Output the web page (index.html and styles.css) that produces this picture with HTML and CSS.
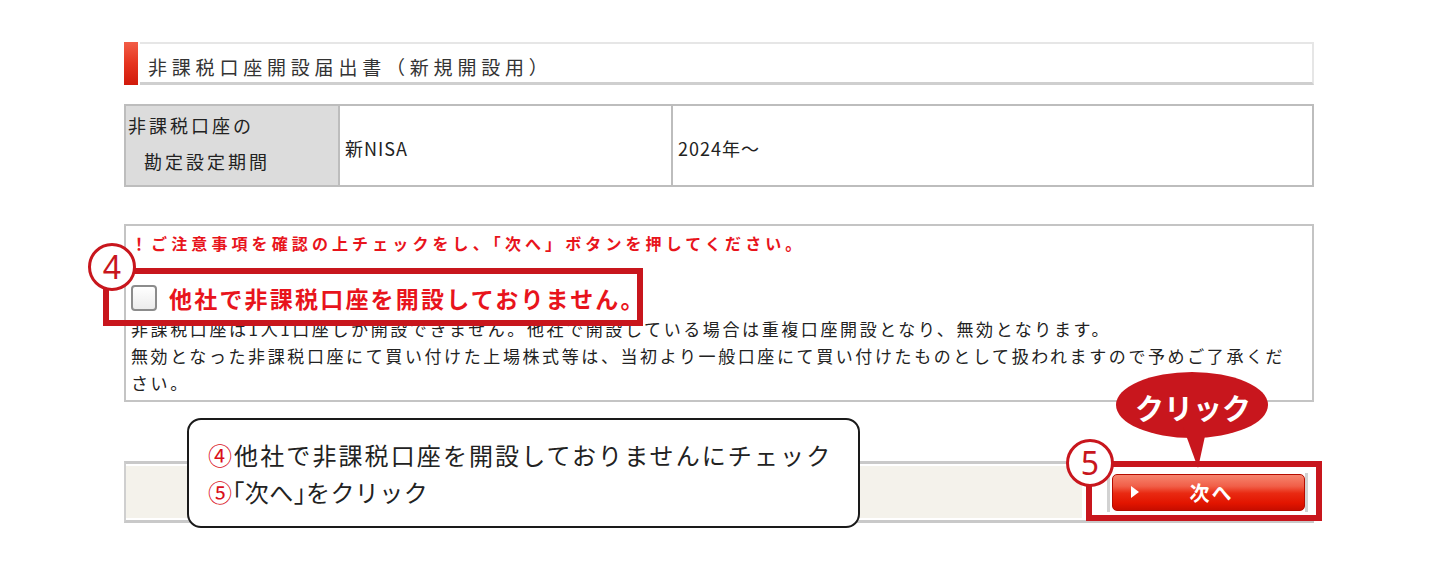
FILE: index.html
```html
<!DOCTYPE html>
<html lang="ja">
<head>
<meta charset="utf-8">
<title>非課税口座開設届出書（新規開設用）</title>
<link rel="stylesheet" href="styles.css">
</head>
<body>
<div class="page">
  <div class="title">
    <span class="title-mark"></span>
    <h2 class="title-box">非課税口座開設届出書（新規開設用）</h2>
  </div>

  <table class="info">
    <tr>
      <th class="info-head"><span class="head-l1">非課税口座の</span><span class="head-l2">勘定設定期間</span></th>
      <td class="info-mid">新NISA</td>
      <td class="info-val">2024年～</td>
    </tr>
  </table>

  <div class="notice">
    <p class="notice-warn">！ご注意事項を確認の上チェックをし、「次へ」ボタンを押してください。</p>
    <label class="check-row"><span class="checkbox"></span><span class="check-label">他社で非課税口座を開設しておりません。</span></label>
    <div class="notes">
      <div class="note-line">非課税口座は1人1口座しか開設できません。他社で開設している場合は重複口座開設となり、無効となります。</div>
      <div class="note-line">無効となった非課税口座にて買い付けた上場株式等は、当初より一般口座にて買い付けたものとして扱われますので予めご了承くだ</div>
      <div class="note-line">さい。</div>
    </div>
  </div>

  <div class="action-bar">
    <div class="bar-fill"></div>
    <div class="bar-btn-cell">
      <span class="btn-frame">
        <button class="btn-next" type="button"><span class="btn-tri"></span><span class="btn-text">次へ</span></button>
      </span>
    </div>
  </div>

  <!-- annotations -->
  <div class="hl hl-4"></div>
  <div class="num num-4">4</div>
  <div class="hl hl-5"></div>
  <div class="num num-5">5</div>
  <svg class="click-bubble" width="156" height="100" viewBox="0 0 156 100">
    <ellipse cx="77" cy="34" rx="76" ry="33" fill="#c8161d"/>
    <polygon points="68,56 92,56 83,97" fill="#c8161d"/>
    <text x="78" y="36" class="click-text" text-anchor="middle" dominant-baseline="central">クリック</text>
  </svg>
  <div class="speech">
    <div class="speech-line"><span class="circ">④</span>他社で非課税口座を開設しておりませんにチェック</div>
    <div class="speech-line speech-line-2"><span class="circ">⑤</span><span class="br">「</span>次へ<span class="br">」</span>をクリック</div>
  </div>
</div>
</body>
</html>
```

FILE: styles.css
```css
* {
  box-sizing: border-box;
}

html,
body {
  min-height: 578px;
}

body {
  margin: 0;
  background: #fff;
  color: #222;
  font-family: "Noto Sans CJK JP", "Noto Sans", sans-serif;
}

.page {
  position: relative;
  width: 1190px;
  margin-left: 124px;
  padding-top: 42px;
  padding-bottom: 40px;
}

/* title */
.title {
  display: flex;
  height: 43px;
}

.title-mark {
  width: 14px;
  background: linear-gradient(#f25d47, #e5341f 50%, #d11a0b);
}

.title-box {
  flex: 1;
  margin: 0 0 0 2px;
  border: 2px solid #e6e6e6;
  border-left: 0;
  border-bottom: 3px solid #cfcfcf;
  padding: 8px 0 0 8px;
  font-size: 19px;
  font-weight: 400;
  line-height: 30px;
  letter-spacing: 4.8px;
  color: #333;
}

/* info table */
.info {
  width: 100%;
  height: 83px;
  margin-top: 19px;
  border-collapse: collapse;
}

.info th,
.info td {
  border: 2px solid #bdbdbd;
  padding: 4px 5px 0;
  font-size: 18px;
  font-weight: 400;
  letter-spacing: 1px;
  text-align: left;
  color: #222;
}

.info-head {
  width: 214px;
  background: #dcdcdc;
}

.info .info-head {
  padding: 0 0 5px 2px;
  line-height: 36px;
  letter-spacing: 3px;
}

.head-l1,
.head-l2 {
  display: block;
  white-space: nowrap;
}

.head-l2 {
  margin-left: 16px;
}

.info-mid {
  width: 333px;
}

/* notice */
.notice {
  height: 178px;
  margin-top: 37px;
  border: 2px solid #c4c4c4;
  padding: 6px 0 0 5px;
}

.notice-warn {
  margin: 0;
  color: #e8141c;
  font-size: 16px;
  font-weight: 700;
  line-height: 22px;
  letter-spacing: 4.1px;
  white-space: nowrap;
}

.check-row {
  display: flex;
  align-items: center;
  height: 30px;
  margin-top: 29px;
}

.checkbox {
  width: 26px;
  height: 26px;
  border: 2px solid #8c8c8c;
  border-radius: 4px;
  background: linear-gradient(#fff, #ececec);
}

.check-label {
  margin-left: 12px;
  color: #e8141c;
  font-size: 23px;
  font-weight: 700;
  letter-spacing: 2.2px;
  white-space: nowrap;
}

.notes {
  margin-top: 2px;
  font-size: 17px;
  line-height: 27px;
  letter-spacing: 2.6px;
  color: #222;
}

.note-line {
  white-space: nowrap;
}

/* action bar */
.action-bar {
  display: flex;
  height: 62px;
  margin-top: 59px;
  border-top: 3px solid #c9c9c9;
  border-bottom: 3px solid #c9c9c9;
  border-left: 2px solid #cfcfcf;
}

.bar-fill {
  flex: 1;
  background: #f4f2eb;
  border-top: 2px solid #fff;
  border-bottom: 2px solid #fff;
}

.bar-btn-cell {
  display: flex;
  align-items: center;
  width: 232px;
  padding-left: 25px;
  background: #fff;
}

.btn-frame {
  display: flex;
  align-items: center;
  height: 39px;
  padding: 0 0 0 2px;
  border-left: 3px solid #d2d2d2;
  border-right: 3px solid #d2d2d2;
}

.btn-next {
  display: flex;
  align-items: center;
  width: 193px;
  height: 37px;
  padding: 0 20px 0 18px;
  border: 1px solid #b50c00;
  border-radius: 5px;
  background: linear-gradient(#f6856f 0%, #f15f48 32%, #e92a12 52%, #e21500 80%, #c70d00 100%);
  color: #fff;
  font-family: "Noto Sans CJK JP", sans-serif;
  font-size: 20px;
  font-weight: 700;
}

.btn-tri {
  width: 0;
  height: 0;
  border-left: 8px solid #fff;
  border-top: 6px solid transparent;
  border-bottom: 6px solid transparent;
}

.btn-text {
  flex: 1;
  text-align: center;
  letter-spacing: 2px;
}

/* annotations */
.hl {
  position: absolute;
  border: 6px solid #c8161d;
}

.hl-4 {
  left: -21px;
  top: 268px;
  width: 540px;
  height: 58px;
}

.hl-5 {
  left: 962px;
  top: 461px;
  width: 236px;
  height: 60px;
}

.num {
  position: absolute;
  width: 48px;
  height: 48px;
  border: 3px solid #c8161d;
  border-radius: 50%;
  background: #fff;
  color: #c8161d;
  font-family: "Noto Sans", sans-serif;
  font-size: 32px;
  line-height: 42px;
  text-align: center;
}

.num-4 {
  left: -36px;
  top: 243px;
}

.num-5 {
  left: 942px;
  top: 439px;
}

.click-bubble {
  position: absolute;
  left: 991px;
  top: 371px;
}

.click-text {
  fill: #fff;
  font-family: "Noto Sans CJK JP", sans-serif;
  font-size: 29px;
  font-weight: 700;
}

.speech {
  position: absolute;
  left: 63px;
  top: 418px;
  width: 673px;
  height: 110px;
  padding: 16px 0 0 19px;
  border: 2px solid #1a1a1a;
  border-radius: 14px;
  background: #fff;
  font-size: 24px;
  line-height: 37px;
  letter-spacing: 2.1px;
  color: #222;
  white-space: nowrap;
}

.speech-line {
  height: 37px;
}

.speech-line-2 {
  letter-spacing: 0.4px;
}

.circ {
  color: #d9101b;
}

.br {
  font-feature-settings: "halt";
}
```
